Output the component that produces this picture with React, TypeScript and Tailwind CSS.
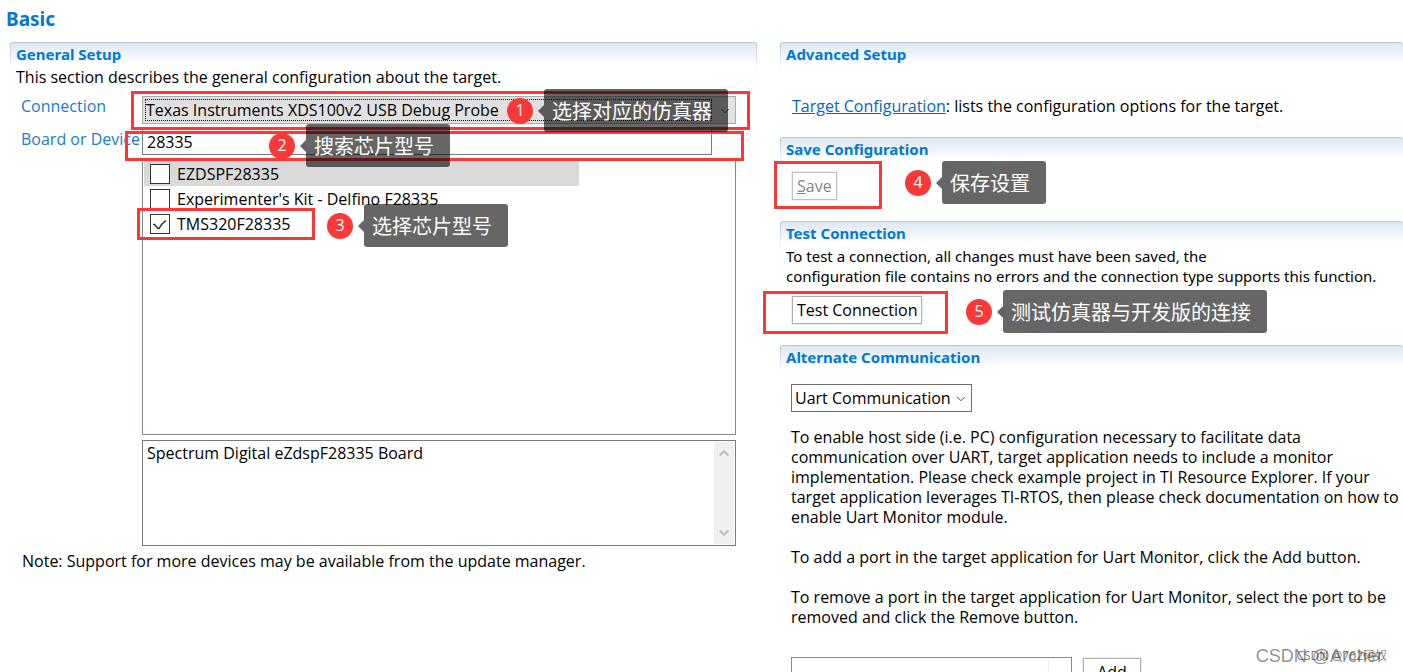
import type { ReactNode } from "react";
import { ChevronDown, ChevronUp } from "lucide-react";

const DEVICES = [
  { id: "ezdsp", name: "EZDSPF28335", checked: false, active: true },
  { id: "delfino", name: "Experimenter's Kit - Delfino F28335", checked: false, active: false },
  { id: "tms320", name: "TMS320F28335", checked: true, active: false },
];

// Numbered marker with a dark speech label next to it
function Callout({ step, label, className }: { step: number; label: string; className: string }) {
  return (
    <div className={`absolute z-20 flex items-center whitespace-nowrap pointer-events-none ${className}`}>
      <span className="flex size-[26px] items-center justify-center rounded-full bg-[#fb3838] pb-0.5 text-base leading-5 text-white">
        {step}
      </span>
      <span className="ml-[5px] h-0 w-0 border-y-6 border-r-6 border-y-transparent border-r-black/60" />
      <span className="rounded-[3px] bg-black/60 pt-[5px] pr-4 pb-0.5 pl-2 text-xl leading-9 text-white">{label}</span>
    </div>
  );
}

function Highlight({ className }: { className: string }) {
  return <div className={`absolute z-10 border-3 border-[#fb3838] pointer-events-none ${className}`} />;
}

function SectionTitle({ children, both = false }: { children: ReactNode; both?: boolean }) {
  return (
    <div className="relative h-5 rounded-t-sm border-t border-[#b4c7dc] bg-linear-to-b from-[#dfe7f2] to-[#fafcfe] px-1.5">
      <span className="absolute top-0 left-0 h-7 w-px bg-linear-to-b from-[#b4c7dc] to-white" />
      {both && <span className="absolute top-0 right-0 h-7 w-px bg-linear-to-b from-[#b4c7dc] to-white" />}
      <h2 className="font-['Noto_Sans',sans-serif] text-[15px] leading-[22px] font-bold text-[#0078d7]">{children}</h2>
    </div>
  );
}

function GeneralSetup() {
  return (
    <section className="min-w-0">
      <SectionTitle both>General Setup</SectionTitle>
      <p className="mt-[5px] px-1.5">This section describes the general configuration about the target.</p>

      <div className="mt-[9px] pr-[21px] pl-[11px]">
        <div className="relative flex">
          <label htmlFor="connection" className="w-[121px] shrink-0 text-[#1a7bd0]">
            Connection
          </label>
          <div className="relative flex-1">
            <select
              id="connection"
              className="block h-7 w-full appearance-none border border-[#acacac] bg-[#e1e1e1] pl-[3px] outline-none"
            >
              <option>Texas Instruments XDS100v2 USB Debug Probe</option>
            </select>
            <span className="pointer-events-none absolute inset-y-[3px] right-6 left-[3px] border border-dotted border-black" />
            <ChevronDown className="pointer-events-none absolute top-2 right-1 size-3.5 text-[#333]" strokeWidth={1.5} />
          </div>
          <Highlight className="-top-[5px] -right-[14px] -bottom-[6px] left-[110px]" />
          <Callout step={1} label="选择对应的仿真器" className="-top-[7px] left-[486px]" />
        </div>

        <div className="relative mt-[5px] flex">
          <label htmlFor="device" className="w-[121px] shrink-0 whitespace-nowrap text-[#1a7bd0]">
            Board or Device
          </label>
          <input
            id="device"
            defaultValue="28335"
            className="mr-6 h-[26px] min-w-0 flex-1 border border-[#7a7a7a] bg-white px-1 outline-none"
          />
          <Highlight className="top-[2px] -right-2 -bottom-[6px] left-[104px]" />
          <Callout step={2} label="搜索芯片型号" className="-top-[5px] left-[248px]" />
        </div>

        <div className="relative mt-[5px] ml-[121px] h-[275px] border border-[#828790] pl-px">
          {DEVICES.map((d) => (
            <label
              key={d.id}
              htmlFor={d.id}
              className={`flex h-[25px] w-[435px] items-center gap-[7px] pl-1.5 ${d.active ? "bg-[#d9d9d9]" : ""}`}
            >
              <span className="relative size-5">
                <input
                  id={d.id}
                  type="checkbox"
                  defaultChecked={d.checked}
                  className="peer block size-5 appearance-none border border-[#333] bg-white"
                />
                <svg
                  viewBox="0 0 20 20"
                  className="pointer-events-none invisible absolute inset-0 size-5 fill-none stroke-[#333] stroke-[1.5] peer-checked:visible"
                >
                  <path d="M3 10.5h1.5l3.5 4h1l3-4.5 4-3.5" />
                </svg>
              </span>
              {d.name}
            </label>
          ))}
          <Highlight className="top-[47px] -left-[6px] h-8 w-[178px]" />
          <Callout step={3} label="选择芯片型号" className="top-[43px] left-[184px]" />
        </div>

        <div className="relative mt-[5px] ml-[121px]">
          <textarea
            aria-label="Device description"
            readOnly
            defaultValue="Spectrum Digital eZdspF28335 Board"
            className="block h-[106px] w-full resize-none overflow-hidden border border-[#7a7a7a] bg-white px-1 py-0.5 outline-none"
          />
          <span className="absolute top-0.5 right-0.5 bottom-0.5 flex w-5 flex-col items-center justify-between bg-[#f0f0f0] py-1 text-[#bfbfbf]">
            <ChevronUp className="size-3.5" strokeWidth={4} />
            <ChevronDown className="size-3.5" strokeWidth={4} />
          </span>
        </div>
        <p className="mt-[5px] pl-px">Note: Support for more devices may be available from the update manager.</p>
      </div>
    </section>
  );
}

function AdvancedSetup() {
  return (
    <div className="min-w-0">
      <section className="h-[95px]">
        <SectionTitle>Advanced Setup</SectionTitle>
        <p className="mt-[34px] pl-3">
          <a href="#target" className="text-[#0066cc] underline">
            Target Configuration
          </a>
          : lists the configuration options for the target.
        </p>
      </section>

      <section className="relative h-[84px]">
        <SectionTitle>Save Configuration</SectionTitle>
        <button
          type="button"
          disabled
          className="mt-[15px] ml-3 block h-7 border border-[#bfbfbf] bg-white px-1 text-[#838383] outline outline-[#efefef]"
        >
          <u>S</u>ave
        </button>
        <Highlight className="top-6 -left-1.5 h-12 w-[108px]" />
        <Callout step={4} label="保存设置" className="top-6 left-[125px]" />
      </section>

      <section className="relative h-[124px]">
        <SectionTitle>Test Connection</SectionTitle>
        <p className="mt-[5px] pl-1.5 font-['Noto_Sans',sans-serif] text-[15px] leading-5 whitespace-nowrap">
          To test a connection, all changes must have been saved, the
          <br />
          configuration file contains no errors and the connection type supports this function.
        </p>
        <button
          type="button"
          className="mt-[10px] ml-3 block h-7 border border-[#adadad] bg-white px-1 outline outline-[#efefef]"
        >
          Test Connection
        </button>
        <Highlight className="top-[70px] -left-[17px] h-[43px] w-[185px]" />
        <Callout step={5} label="测试仿真器与开发版的连接" className="top-[69px] left-[186px]" />
      </section>

      <section>
        <SectionTitle>Alternate Communication</SectionTitle>
        <div className="pt-[19px] pl-[11px]">
          <div className="relative w-[181px]">
            <select
              aria-label="Alternate communication"
              className="block h-7 w-full appearance-none border border-[#707070] bg-white pl-[3px] outline-none"
            >
              <option>Uart Communication</option>
            </select>
            <ChevronDown className="pointer-events-none absolute top-2 right-1 size-3.5 text-[#333]" strokeWidth={1.5} />
          </div>
          <div className="mt-[15px] flex flex-col gap-5 whitespace-nowrap">
            <p>
              To enable host side (i.e. PC) configuration necessary to facilitate data
              <br />
              communication over UART, target application needs to include a monitor
              <br />
              implementation. Please check example project in TI Resource Explorer. If your
              <br />
              target application leverages TI-RTOS, then please check documentation on how to
              <br />
              enable Uart Monitor module.
            </p>
            <p>To add a port in the target application for Uart Monitor, click the Add button.</p>
            <p>
              To remove a port in the target application for Uart Monitor, select the port to be
              <br />
              removed and click the Remove button.
            </p>
          </div>
          <div className="mt-[30px] flex items-start gap-[11px]">
            <div className="h-24 w-[281px] border border-[#828790] pt-px pr-[22px]">
              <div className="h-6 border-r border-[#e5f0fb]" />
            </div>
            <button
              type="button"
              className="mt-px h-7 w-[58px] border border-[#adadad] bg-white outline outline-[#efefef]"
            >
              Add
            </button>
          </div>
        </div>
      </section>
    </div>
  );
}

export default function App() {
  return (
    <main className="relative h-screen overflow-hidden bg-white font-['Open_Sans','Noto_Sans_CJK_SC',sans-serif] text-base leading-5 text-black">
      <h1 className="px-1.5 pt-[5px] font-['Noto_Sans',sans-serif] text-[19px] leading-7 font-bold text-[#0078d7]">
        Basic
      </h1>
      <div className="mt-[9px] grid grid-cols-[minmax(0,747fr)_minmax(0,623fr)] gap-[23px] pl-2.5">
        <GeneralSetup />
        <AdvancedSetup />
      </div>
      <span className="absolute right-5 bottom-1 font-['Liberation_Sans','Noto_Sans_CJK_SC',sans-serif] text-lg leading-6 whitespace-nowrap text-black/45">
        CSDN @Archer
      </span>
      <span className="absolute right-4 bottom-2 font-['Noto_Sans','Noto_Sans_CJK_SC',sans-serif] text-xs leading-4 whitespace-nowrap text-black/50">
        CSDN @762码奴
      </span>
    </main>
  );
}
